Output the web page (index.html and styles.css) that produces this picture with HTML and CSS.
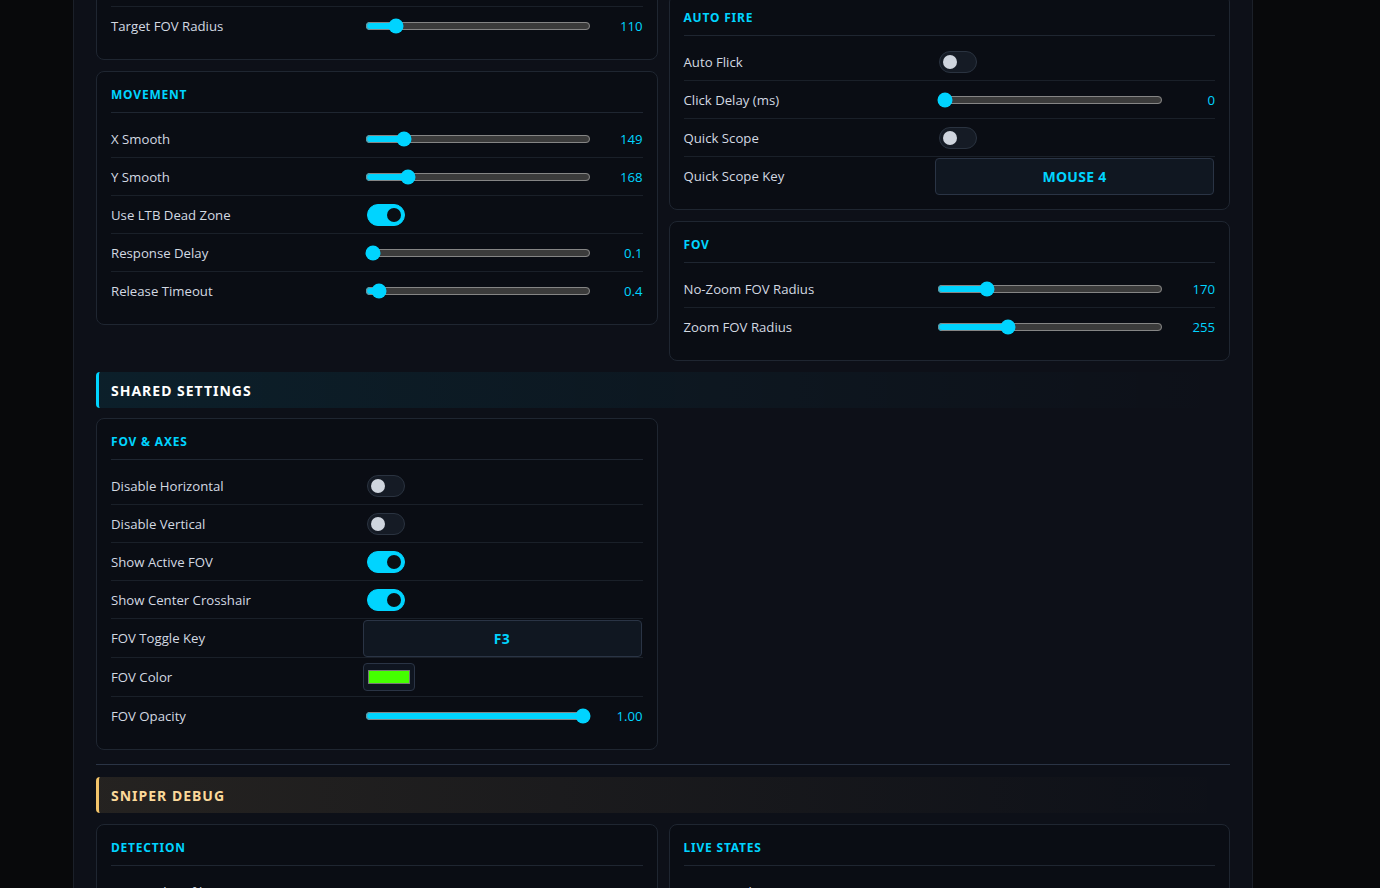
FILE: index.html
```html
<!DOCTYPE html>
<html lang="en">
<head>
    <meta charset="UTF-8">
    <meta name="viewport" content="width=device-width, initial-scale=1.0">
    <title>Sniper Settings</title>
    <link rel="stylesheet" href="styles.css">
</head>
<body>

<div class="app">

    <div class="grid first">
        <div class="column">
            <div class="card">
                <div class="card-title">TARGETING</div>
                <div class="row"><span class="label">Aim Key</span><div class="control"><button class="key-btn">MOUSE 5</button></div></div>
                <div class="row"><span class="label">Target Bone</span><div class="control"><button class="key-btn">HEAD</button></div></div>
                <div class="row"><span class="label">Prediction</span><div class="control"><span class="toggle"></span></div></div>
                <div class="row"><span class="label">Target FOV Radius</span><div class="control"><input type="range" min="0" max="1000" value="110"><span class="value">110</span></div></div>
            </div>
            <div class="card">
                <div class="card-title">MOVEMENT</div>
                <div class="row"><span class="label">X Smooth</span><div class="control"><input type="range" min="0" max="1000" value="149"><span class="value">149</span></div></div>
                <div class="row"><span class="label">Y Smooth</span><div class="control"><input type="range" min="0" max="1000" value="168"><span class="value">168</span></div></div>
                <div class="row"><span class="label">Use LTB Dead Zone</span><div class="control"><span class="toggle on"></span></div></div>
                <div class="row"><span class="label">Response Delay</span><div class="control"><input type="range" min="0.1" max="5" step="0.1" value="0.1"><span class="value">0.1</span></div></div>
                <div class="row"><span class="label">Release Timeout</span><div class="control"><input type="range" min="0.1" max="10" step="0.1" value="0.4"><span class="value">0.4</span></div></div>
            </div>
        </div>

        <div class="column">
            <div class="card">
                <div class="card-title">TRIGGER</div>
                <div class="row"><span class="label">Trigger Key</span><div class="control"><button class="key-btn">MOUSE 5</button></div></div>
                <div class="row"><span class="label">Trigger Bot</span><div class="control"><span class="toggle"></span></div></div>
            </div>
            <div class="card">
                <div class="card-title">AUTO FIRE</div>
                <div class="row"><span class="label">Auto Flick</span><div class="control"><span class="toggle"></span></div></div>
                <div class="row"><span class="label">Click Delay (ms)</span><div class="control"><input type="range" min="0" max="500" value="0"><span class="value">0</span></div></div>
                <div class="row"><span class="label">Quick Scope</span><div class="control"><span class="toggle"></span></div></div>
                <div class="row"><span class="label">Quick Scope Key</span><div class="control"><button class="key-btn">MOUSE 4</button></div></div>
            </div>
            <div class="card">
                <div class="card-title">FOV</div>
                <div class="row"><span class="label">No-Zoom FOV Radius</span><div class="control"><input type="range" min="0" max="850" value="170"><span class="value">170</span></div></div>
                <div class="row"><span class="label">Zoom FOV Radius</span><div class="control"><input type="range" min="0" max="850" value="255"><span class="value">255</span></div></div>
            </div>
        </div>
    </div>

    <div class="section">
        <div class="section-bar">SHARED SETTINGS</div>
        <div class="grid">
            <div class="column">
                <div class="card">
                    <div class="card-title">FOV &amp; AXES</div>
                    <div class="row"><span class="label">Disable Horizontal</span><div class="control"><span class="toggle"></span></div></div>
                    <div class="row"><span class="label">Disable Vertical</span><div class="control"><span class="toggle"></span></div></div>
                    <div class="row"><span class="label">Show Active FOV</span><div class="control"><span class="toggle on"></span></div></div>
                    <div class="row"><span class="label">Show Center Crosshair</span><div class="control"><span class="toggle on"></span></div></div>
                    <div class="row"><span class="label">FOV Toggle Key</span><div class="control"><button class="key-btn">F3</button></div></div>
                    <div class="row"><span class="label">FOV Color</span><div class="control"><input class="color-input" type="color" value="#44ff00"></div></div>
                    <div class="row"><span class="label">FOV Opacity</span><div class="control"><input type="range" min="0" max="1" step="0.01" value="1"><span class="value">1.00</span></div></div>
                </div>
            </div>
            <div class="column"></div>
        </div>
    </div>

    <div class="section debug">
        <div class="section-bar gold">SNIPER DEBUG</div>
        <div class="grid">
            <div class="column">
                <div class="card">
                    <div class="card-title">DETECTION</div>
                    <div class="row"><span class="label">Detected Profile</span><div class="control"><span class="stat">ZAIM</span></div></div>
                    <div class="row"><span class="label">Scope State</span><div class="control"><span class="stat">IDLE</span></div></div>
                </div>
            </div>
            <div class="column">
                <div class="card">
                    <div class="card-title">LIVE STATES</div>
                    <div class="row"><span class="label">Scope Mode</span><div class="control"><span class="stat off">OFF</span></div></div>
                    <div class="row"><span class="label">Flick Active</span><div class="control"><span class="stat off">OFF</span></div></div>
                </div>
            </div>
        </div>
    </div>

</div>

</body>
</html>
```

FILE: styles.css
```css
* {
    box-sizing: border-box;
}
body {
    margin: 0;
    background-color: #08090b;
    font-family: "Open Sans", "Noto Sans", sans-serif;
    font-size: 13.2px;
    color: #d3d9e2;
    color-scheme: dark;
    overflow: hidden;
}
.app {
    width: 1180px;
    margin-left: 73px;
    min-height: 100vh;
    padding: 0 22px 40px;
    background-color: #0d1018;
    border-left: 1px solid #1b2029;
    border-right: 1px solid #1b2029;
}
.grid {
    display: grid;
    grid-template-columns: 1fr 1fr;
    gap: 11px;
    align-items: start;
}
/* page is scrolled down a bit in the capture */
.grid.first {
    margin-top: -158px;
}
.column {
    display: flex;
    flex-direction: column;
    gap: 11px;
}
.card {
    background-color: #0a0d14;
    border: 1px solid #1f2631;
    border-radius: 8px;
    padding: 0 14px 14px;
}
.card-title {
    height: 41px;
    padding-top: 4px;
    display: flex;
    align-items: center;
    border-bottom: 1px solid #1f2631;
    margin-bottom: 7px;
    color: #00d4ff;
    font-family: "Noto Sans", sans-serif;
    font-weight: 700;
    font-size: 12px;
    letter-spacing: 0.8px;
}
.row {
    display: grid;
    grid-template-columns: 1fr 280px;
    align-items: center;
    min-height: 38px;
    border-bottom: 1px solid #1a2029;
}
.row:last-child {
    border-bottom: none;
}
.label {
    color: #d3d9e2;
}
.control {
    display: flex;
    align-items: center;
}
.control input[type="range"] {
    flex: 1;
    margin: 2px;
    accent-color: #00d4ff;
}
.value {
    width: 50px;
    text-align: right;
    color: #00d4ff;
}
.toggle {
    position: relative;
    width: 38px;
    height: 22px;
    margin-left: 4px;
    border-radius: 11px;
    background-color: #151b25;
    border: 1px solid #2a3340;
}
.toggle::after {
    content: "";
    position: absolute;
    top: 3px;
    left: 3px;
    width: 14px;
    height: 14px;
    border-radius: 50%;
    background-color: #cfd5de;
}
.toggle.on {
    background-color: #00d4ff;
    border-color: #00d4ff;
}
.toggle.on::after {
    left: 19px;
    background-color: #0a0e14;
}
.key-btn {
    width: 279px;
    height: 37px;
    margin-top: 1px;
    background-color: #101721;
    border: 1px solid #2a3445;
    border-radius: 4px;
    color: #00d4ff;
    font-family: "Noto Sans", sans-serif;
    font-weight: 700;
    font-size: 14px;
    letter-spacing: 0.3px;
}
.color-input {
    width: 52px;
    height: 28px;
    margin: 5px 0;
    padding: 6px 4px;
    background-color: #0f1520;
    border: 1px solid #2a3445;
    border-radius: 4px;
}
.color-input::-webkit-color-swatch-wrapper {
    padding: 0;
}
.color-input::-webkit-color-swatch {
    border: 1px solid #777;
    border-radius: 0;
}
.stat {
    color: #d3d9e2;
    font-weight: 600;
}
.stat.off {
    color: #ff5c8a;
}
.section {
    margin-top: 11px;
}
.section-bar {
    height: 36px;
    display: flex;
    align-items: center;
    padding-left: 12px;
    margin-bottom: 10px;
    border-left: 3px solid #00d4ff;
    border-radius: 4px 0 0 4px;
    background: linear-gradient(90deg, rgba(0, 212, 255, 0.08), rgba(0, 212, 255, 0));
    color: #ffffff;
    font-family: "Noto Sans", sans-serif;
    font-weight: 700;
    font-size: 14px;
    letter-spacing: 1px;
}
.section-bar.gold {
    margin-bottom: 11px;
    border-left-color: #f2c46a;
    background: linear-gradient(90deg, rgba(245, 197, 107, 0.1), rgba(245, 197, 107, 0));
    color: #fbd99a;
}
.section.debug {
    margin-top: 14px;
    padding-top: 12px;
    border-top: 1px solid #2a3445;
}
```
